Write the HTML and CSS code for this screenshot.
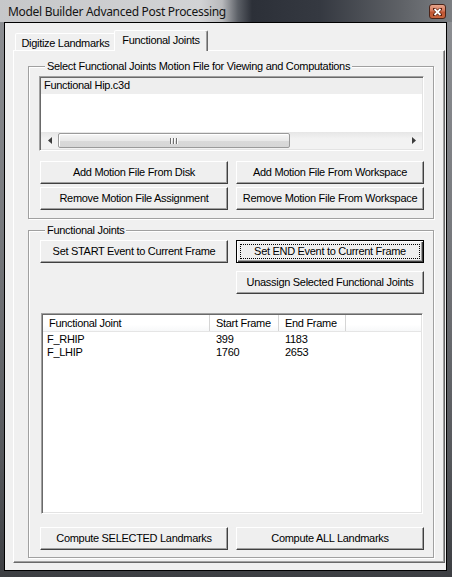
FILE: index.html
```html
<!DOCTYPE html>
<html>
<head>
<meta charset="utf-8">
<link rel="stylesheet" href="styles.css">
</head>
<body>
<div class="titlebar">
  <span class="title">Model Builder Advanced Post Processing</span>
  <span class="close"><svg width="9" height="8" viewBox="0 0 9 8"><path d="M1.5 1L7.5 7M7.5 1L1.5 7" stroke="#5a1d0c" stroke-width="3.2" stroke-linecap="square"/><path d="M1.5 1L7.5 7M7.5 1L1.5 7" stroke="#fff" stroke-width="1.8"/></svg></span>
</div>
<div class="client">
  <div class="tabs">
    <div class="tab inactive">Digitize Landmarks</div>
    <div class="tab active">Functional Joints</div>
  </div>
  <div class="panel">
    <div class="group g1">
      <div class="glabel">Select Functional Joints Motion File for Viewing and Computations</div>
      <div class="listbox">
        <div class="lb-items">
          <div class="lb-item">Functional Hip.c3d</div>
        </div>
        <div class="hscroll">
          <div class="arrow"><svg width="4" height="7" viewBox="0 0 4 7"><path d="M4 0V7L0 3.5Z" fill="#3c3c3c"/></svg></div>
          <div class="thumb"><span class="grip"></span><span class="grip"></span><span class="grip"></span></div>
          <div class="track"></div>
          <div class="arrow"><svg width="4" height="7" viewBox="0 0 4 7"><path d="M0 0V7L4 3.5Z" fill="#3c3c3c"/></svg></div>
        </div>
      </div>
      <div class="btn-grid first">
        <div class="btn">Add Motion File From Disk</div>
        <div class="btn">Add Motion File From Workspace</div>
        <div class="btn">Remove Motion File Assignment</div>
        <div class="btn">Remove Motion File From Workspace</div>
      </div>
    </div>
    <div class="group g2">
      <div class="glabel">Functional Joints</div>
      <div class="btn-grid events">
        <div class="btn">Set START Event to Current Frame</div>
        <div class="btn focus"><span class="focus-rect">Set END Event to Current Frame</span></div>
      </div>
      <div class="btn-grid unassign">
        <div></div>
        <div class="btn">Unassign Selected Functional Joints</div>
      </div>
      <div class="listview">
        <div class="lv-head">
          <div class="c1">Functional Joint</div>
          <div class="c2">Start Frame</div>
          <div class="c3">End Frame</div>
          <div class="c4"></div>
        </div>
        <div class="lv-rows">
          <div class="lv-row"><div class="c1">F_RHIP</div><div class="c2">399</div><div class="c3">1183</div></div>
          <div class="lv-row"><div class="c1">F_LHIP</div><div class="c2">1760</div><div class="c3">2653</div></div>
        </div>
      </div>
      <div class="btn-grid compute">
        <div class="btn">Compute SELECTED Landmarks</div>
        <div class="btn">Compute ALL Landmarks</div>
      </div>
    </div>
  </div>
</div>
</body>
</html>
```
FILE: styles.css
```css
* { box-sizing: border-box; }
html, body { margin: 0; padding: 0; }
body {
  width: 452px;
  height: 577px;
  overflow: hidden;
  background: linear-gradient(#8e9094 0, #77797d 40%, #55575b 80%, #3c3e42 100%);
  font-family: "Liberation Sans", Arial, sans-serif;
  font-size: 11px;
  letter-spacing: -0.3px;
  color: #000;
}
.titlebar {
  height: 22px;
  display: flex;
  align-items: center;
  padding: 0 6px 0 8px;
  background: linear-gradient(90deg, #c6c7c9 0, #d2d3d5 200px, #b9babd 222px, #5b5f66 238px, #2c3038 252px, #353941 320px, #5e6166 400px, #7b7e82 452px);
}
.title {
  font-family: "Noto Sans", "Open Sans", sans-serif;
  font-size: 12px;
  color: #141414;
  letter-spacing: -0.3px;
}
.close {
  margin-left: auto;
  width: 17px;
  height: 15px;
  margin-top: 1px;
  border: 1px solid #4b2419;
  border-radius: 3px;
  background: linear-gradient(#e5a58c 0, #d5775a 45%, #bf5634 55%, #c9653e 100%);
  display: flex;
  align-items: center;
  justify-content: center;
}
.client {
  margin: 0 5px 0 4px;
  height: 549px;
  border: 1px solid #000;
  background: #f0f0f0;
  padding: 7px 0 0 8px;
}
.tabs {
  display: flex;
  align-items: flex-end;
  height: 20px;
}
.tab {
  display: flex;
  align-items: center;
  justify-content: center;
  border: 1px solid;
  border-bottom: none;
  border-color: #fff #696969 transparent #fff;
  border-radius: 2px 2px 0 0;
  background: #f0f0f0;
}
.tab.inactive {
  margin-left: 2px;
  width: 101px;
  height: 17px;
  padding-top: 1px;
}
.tab.active {
  position: relative;
  z-index: 1;
  margin-left: -2px;
  width: 94px;
  height: 21px;
  margin-bottom: -1px;
  padding-bottom: 2px;
  box-shadow: inset -1px 0 #a0a0a0;
}
.panel {
  width: 432px;
  height: 513px;
  border: 1px solid;
  border-color: #fff #696969 #696969 #fff;
  box-shadow: inset -1px -1px #a0a0a0;
  padding: 15px 0 0 14px;
}
.group {
  width: 406px;
  border: 1px solid #a0a0a0;
  box-shadow: inset 1px 1px #fff, 1px 1px #fff;
  padding: 0 8px 8px 10px;
}
.g2 { margin-top: 11px; padding-bottom: 7px; }
.glabel {
  display: table;
  margin: -7px 0 0 6px;
  padding: 0 2px;
  line-height: 13px;
  background: #f0f0f0;
}
.listbox {
  margin-top: 3px;
  width: 385px;
  height: 75px;
  border: 1px solid;
  border-color: #a0a0a0 #fff #fff #a0a0a0;
  box-shadow: inset 1px 1px #696969, inset -1px -1px #e3e3e3;
  background: #fff;
  padding: 1px;
  display: flex;
  flex-direction: column;
}
.lb-items { flex: 1; }
.lb-item {
  height: 16px;
  line-height: 15px;
  padding-left: 3px;
  background: #eeeeee;
}
.hscroll {
  height: 17px;
  display: flex;
  align-items: center;
  background: linear-gradient(#e6e6e6, #f2f2f2 40%, #f2f2f2);
}
.arrow {
  width: 17px;
  height: 17px;
  display: flex;
  align-items: center;
  justify-content: center;
}
.thumb {
  width: 232px;
  height: 15px;
  border: 1px solid #9a9a9a;
  border-radius: 2px;
  background: linear-gradient(#f6f6f6, #e9e9e9 50%, #dadada 51%, #d6d6d6);
  box-shadow: inset 1px 1px #fff;
  display: flex;
  align-items: center;
  justify-content: center;
  gap: 1px;
}
.grip {
  width: 1px;
  height: 6px;
  background: #6f6f6f;
  box-shadow: 1px 0 #fbfbfb;
  margin-right: 1px;
}
.track { flex: 1; }
.btn-grid {
  display: grid;
  grid-template-columns: 188px 188px;
  column-gap: 8px;
  row-gap: 3px;
  margin-left: 1px;
}
.btn-grid.first { margin-top: 10px; }
.btn-grid.events { margin-top: 3px; }
.btn-grid.unassign { margin-top: 8px; }
.btn-grid.compute { margin-top: 13px; }
.btn {
  height: 23px;
  background: #efefef;
  border: 1px solid;
  border-color: #fff #404040 #404040 #fff;
  box-shadow: inset -1px -1px #a0a0a0;
  display: flex;
  align-items: center;
  justify-content: center;
  padding-bottom: 1px;
  white-space: nowrap;
}
.btn.focus {
  border: 1px solid #000;
  box-shadow: inset 1px 1px #fff, inset -1px -1px #404040, inset -2px -2px #a0a0a0;
  padding: 0;
}
.focus-rect {
  flex: 1;
  align-self: stretch;
  margin: 3px 3px 3px 3px;
  border: 1px dotted #000;
  display: flex;
  align-items: center;
  justify-content: center;
  padding-bottom: 1px;
}
.listview {
  margin: 19px 0 0 2px;
  width: 382px;
  height: 201px;
  border: 1px solid;
  border-color: #a0a0a0 #fff #fff #a0a0a0;
  box-shadow: inset 1px 1px #696969, inset -1px -1px #e3e3e3;
  background: #fff;
  padding: 1px;
}
.lv-head {
  display: flex;
  height: 17px;
  background: linear-gradient(#fff, #fff 60%, #f7f8f9);
  border-bottom: 1px solid #e5e5e5;
}
.lv-head > div {
  border-right: 1px solid #d5d5d5;
  padding-left: 6px;
  line-height: 16px;
}
.lv-head .c4 { flex: 1; border-right: none; }
.c1 { width: 167px; }
.c2 { width: 69px; }
.c3 { width: 67px; }
.lv-rows { padding-top: 1px; }
.lv-row {
  display: flex;
  height: 13px;
  line-height: 13px;
}
.lv-row .c1 { padding-left: 4px; }
.lv-row .c2, .lv-row .c3 { padding-left: 6px; }
```
